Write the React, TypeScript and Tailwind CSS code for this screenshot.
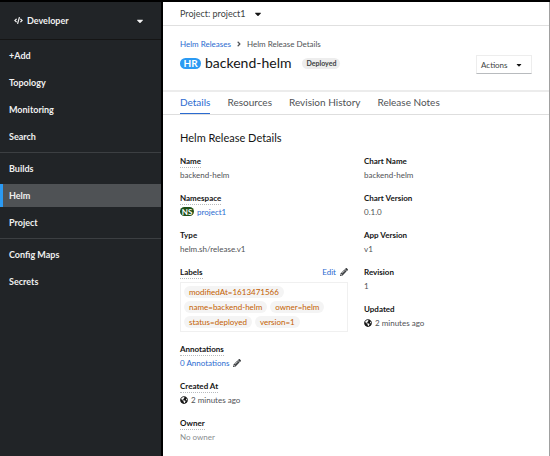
import type { ReactNode } from "react";
import { FaAngleRight, FaCaretDown, FaCode, FaGlobeAmericas, FaPencilAlt } from "react-icons/fa";

const navGroups = [
  ["+Add", "Topology", "Monitoring", "Search"],
  ["Builds", "Helm", "Project"],
  ["Config Maps", "Secrets"],
];

const tabs = ["Details", "Resources", "Revision History", "Release Notes"];

const labels = [
  "modifiedAt=1613471566",
  "name=backend-helm",
  "owner=helm",
  "status=deployed",
  "version=1",
];

function Sidebar() {
  return (
    <aside className="flex w-[163px] shrink-0 flex-col border-r-2 border-black bg-[#212427] text-[9px] font-bold text-[#f0f0f0]">
      <button type="button" className="flex h-[38px] items-center border-b border-[#151515] pr-[16px] pl-[14px]">
        <FaCode className="mr-1 size-[9px]" />
        <span>Developer</span>
        <FaCaretDown className="ml-auto size-[10px]" />
      </button>
      <nav>
        {navGroups.map((group) => (
          <ul key={group[0]} className="flex flex-col gap-1 border-b border-[#3c3f42] py-1 last:border-b-0">
            {group.map((item) => (
              <li key={item}>
                <a
                  href="#"
                  className={
                    item === "Helm"
                      ? "flex h-[23px] items-center border-l-[3px] border-[#2b9af3] bg-[#4f5255] pl-[6px]"
                      : "flex h-[23px] items-center pl-[9px]"
                  }
                >
                  {item}
                </a>
              </li>
            ))}
          </ul>
        ))}
      </nav>
    </aside>
  );
}

function Field({ name, dotted, children }: { name: string; dotted?: boolean; children: ReactNode }) {
  return (
    <div>
      <dt className="flex h-[13px] font-bold text-[#151515]">
        <span className={dotted ? "border-b border-dotted border-[#b8bbbe] leading-3" : "leading-3"}>{name}</span>
      </dt>
      <dd className="flex h-[13px] items-center text-[#4f5255]">{children}</dd>
    </div>
  );
}

function Timestamp() {
  return (
    <>
      <FaGlobeAmericas className="mr-[3px] size-2 text-[#151515]" />
      2 minutes ago
    </>
  );
}

export default function App() {
  return (
    <div className="flex min-h-screen border-t-2 border-black bg-white font-['Lato',sans-serif] text-[10px] text-[#151515]">
      <Sidebar />
      <main className="min-w-0 flex-1 border-r border-[#a0a0a0]">
        <div className="flex h-6 items-center border-b border-[#e0e0e0] px-[17px]">
          <button type="button" className="flex items-center gap-2 text-[9px] text-[#3c3f42]">
            Project: project1
            <FaCaretDown className="size-[10px] text-[#151515]" />
          </button>
        </div>

        <header className="flex h-[66px] items-start justify-between border-b-2 border-[#ececec] px-[17px]">
          <div className="pt-3">
            <nav aria-label="Breadcrumb" className="flex h-3 items-center text-[8px] text-[#4f5255]">
              <a href="#" className="text-[#2b6bd0]">Helm Releases</a>
              <FaAngleRight className="mx-1 size-2" />
              <span>Helm Release Details</span>
            </nav>
            <div className="mt-[3px] flex h-5 items-center">
              <span className="mr-1 flex h-[11px] w-[21px] items-center justify-center rounded-full bg-[#2b9af3] text-[10px] font-bold text-white">
                HR
              </span>
              <h1 className="text-[14px] leading-5">backend-helm</h1>
              <span className="ml-[11px] flex h-[11px] items-center rounded-full bg-[#ededed] px-1 text-[7px] font-bold text-[#3c3f42]">
                Deployed
              </span>
            </div>
          </div>
          <button
            type="button"
            className="mt-[29px] flex h-[19px] w-14 items-center justify-between border border-[#ededed] border-b-[#b8bbbe] pr-2 pl-1 text-[8px] text-[#3c3f42]"
          >
            Actions
            <FaCaretDown className="size-2 text-[#151515]" />
          </button>
        </header>

        <div role="tablist" className="flex h-[23px] gap-[17px] border-b border-[#dedede] px-[17px] text-[10px] text-[#4f5255]">
          {tabs.map((tab) => (
            <button
              key={tab}
              type="button"
              role="tab"
              aria-selected={tab === "Details"}
              className={tab === "Details" ? "border-b border-[#2b6bd0] text-[#2b6bd0]" : "border-b border-transparent"}
            >
              {tab}
            </button>
          ))}
        </div>

        <section className="px-[17px] pt-[15px]">
          <h2 className="text-[11px] leading-4">Helm Release Details</h2>
          <div className="mt-[9px] grid grid-cols-2 gap-4 text-[8px]">
            <dl className="flex flex-col gap-[11px]">
              <Field name="Name" dotted>backend-helm</Field>
              <Field name="Namespace" dotted>
                <span className="mr-[3px] flex h-[9px] w-[14px] items-center justify-center rounded-full bg-[#1e4f18] text-[8px] font-bold text-white">
                  NS
                </span>
                <a href="#" className="text-[#2b6bd0]">project1</a>
              </Field>
              <Field name="Type">helm.sh/release.v1</Field>
              <div>
                <dt className="flex h-[13px] items-start justify-between leading-3">
                  <span className="border-b border-dotted border-[#b8bbbe] font-bold">Labels</span>
                  <button type="button" className="flex items-center gap-1 text-[#2b6bd0]">
                    Edit
                    <FaPencilAlt className="size-2 text-[#3c3f42]" />
                  </button>
                </dt>
                <dd className="mt-[3px] flex flex-wrap gap-[3px] border border-[#f0f0f0] p-[3px]">
                  {labels.map((label) => (
                    <a key={label} href="#" className="flex h-3 items-center rounded-full bg-[#f4f4f4] px-[5px] text-[#c46100]">
                      {label}
                    </a>
                  ))}
                </dd>
              </div>
              <Field name="Annotations" dotted>
                <button type="button" className="flex items-center gap-1 text-[#2b6bd0]">
                  0 Annotations
                  <FaPencilAlt className="size-2 text-[#3c3f42]" />
                </button>
              </Field>
              <Field name="Created At" dotted><Timestamp /></Field>
              <Field name="Owner" dotted>
                <span className="text-[#8a8d90]">No owner</span>
              </Field>
            </dl>
            <dl className="flex flex-col gap-[11px]">
              <Field name="Chart Name">backend-helm</Field>
              <Field name="Chart Version">0.1.0</Field>
              <Field name="App Version">v1</Field>
              <Field name="Revision">1</Field>
              <Field name="Updated"><Timestamp /></Field>
            </dl>
          </div>
        </section>
      </main>
    </div>
  );
}
